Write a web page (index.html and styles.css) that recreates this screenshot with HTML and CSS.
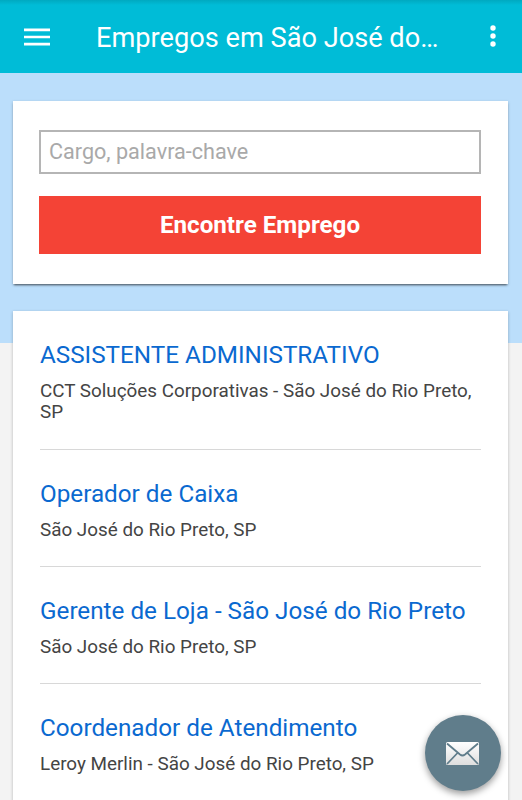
FILE: index.html
```html
<!DOCTYPE html>
<html lang="pt-BR">
<head>
  <meta charset="UTF-8">
  <meta name="viewport" content="width=device-width, initial-scale=1.0">
  <title>Empregos em São José do Rio Preto</title>
  <link rel="stylesheet" href="styles.css">
</head>
<body>
  <header class="toolbar">
    <svg class="menu-icon" width="26" height="18" viewBox="0 0 26 18">
      <path d="M0 1.8h26M0 9h26M0 16.2h26" stroke="#fff" stroke-width="2.7"/>
    </svg>
    <h1>Empregos em São José do…</h1>
    <svg class="more-icon" width="6" height="22" viewBox="0 0 6 22">
      <circle cx="3" cy="2" r="2.7" fill="#fff"/>
      <circle cx="3" cy="10" r="2.7" fill="#fff"/>
      <circle cx="3" cy="18" r="2.7" fill="#fff"/>
    </svg>
  </header>

  <main class="content">
    <form class="card search">
      <input type="text" placeholder="Cargo, palavra-chave">
      <button type="button">Encontre Emprego</button>
    </form>

    <ul class="card jobs">
      <li>
        <h2>ASSISTENTE ADMINISTRATIVO</h2>
        <p>CCT Soluções Corporativas - São José do Rio Preto, SP</p>
      </li>
      <li>
        <h2>Operador de Caixa</h2>
        <p>São José do Rio Preto, SP</p>
      </li>
      <li>
        <h2>Gerente de Loja - São José do Rio Preto</h2>
        <p>São José do Rio Preto, SP</p>
      </li>
      <li>
        <h2>Coordenador de Atendimento</h2>
        <p>Leroy Merlin - São José do Rio Preto, SP</p>
      </li>
    </ul>
  </main>

  <button class="fab" type="button" aria-label="E-mail">
    <svg width="33" height="23" viewBox="0 0 33 23">
      <defs>
        <linearGradient id="paper" x1="0" y1="0" x2="0" y2="1">
          <stop offset="0" stop-color="#fff"/>
          <stop offset="1" stop-color="#dedede"/>
        </linearGradient>
      </defs>
      <rect width="33" height="23" rx="1.5" fill="url(#paper)"/>
      <path d="M1 1.5L14 12.5Q16.5 14.5 19 12.5L32 1.5M1 22L11.5 11M32 22L21.5 11" fill="none" stroke="#607d8b" stroke-width="1.8"/>
    </svg>
  </button>
</body>
</html>
```

FILE: styles.css
```css
/* General Styles */
* {
  box-sizing: border-box;
}

body {
  font-family: Roboto, sans-serif;
  background: #f3f3f3;
  margin: 0;
  height: 800px;
  overflow: hidden;
}

/* Top bar */
.toolbar {
  display: flex;
  align-items: center;
  height: 73px;
  padding: 0 26.5px 0 24px;
  background: linear-gradient(#00a9c0, #00bcd7 5px);
  color: #fff;
}

.toolbar h1 {
  flex: 1;
  margin: 2px 0 0 46px;
  font-size: 27.2px;
  font-weight: 400;
  white-space: nowrap;
}

.more-icon {
  overflow: visible;
}

/* Light blue band behind the cards */
.content {
  height: 727px;
  padding: 28px 14px 0 13px;
  background: linear-gradient(#bbdefb 270px, #f3f3f3 270px);
}

.card {
  background: #fff;
  box-shadow: 0 1px 3px rgba(0, 0, 0, 0.25);
}

.search {
  height: 183px;
  padding: 29px 27px 0 26px;
  margin-bottom: 27px;
  box-shadow: 0 2px 2px -1px rgba(0, 0, 0, 0.55), 0 1px 3px rgba(0, 0, 0, 0.2);
}

.search input {
  display: block;
  width: 100%;
  height: 44px;
  padding: 0 8px 2px;
  border: 2px solid #b5b5b5;
  font: 21.6px Roboto, sans-serif;
}

.search input::placeholder {
  color: #a9a9a9;
}

.search button {
  width: 100%;
  height: 58px;
  margin-top: 22px;
  border: none;
  background: #f44336;
  color: #fff;
  font: 700 24.2px Roboto, sans-serif;
}

/* Job list */
.jobs {
  list-style: none;
  height: 520px;
  margin: 0;
  padding: 0 27px;
  overflow: hidden;
}

.jobs li {
  padding: 29px 0 25px;
  border-bottom: 1px solid #d8d8d8;
}

.jobs li:first-child {
  padding-bottom: 26px;
}

.jobs li:last-child {
  border-bottom: none;
}

.jobs h2 {
  margin: 0 0 11px;
  color: #0a69d0;
  font-size: 24.25px;
  font-weight: 400;
  line-height: 30px;
  white-space: nowrap;
}

.jobs p {
  margin: 0;
  color: #444;
  font-size: 18.85px;
  line-height: 21px;
}

/* Floating mail button */
.fab {
  position: fixed;
  right: 21.5px;
  bottom: 9px;
  display: flex;
  align-items: center;
  justify-content: center;
  width: 76px;
  height: 76px;
  padding: 0;
  border: none;
  border-radius: 50%;
  background: #607d8b;
  box-shadow: 0 3px 7px rgba(0, 0, 0, 0.4);
}
```
